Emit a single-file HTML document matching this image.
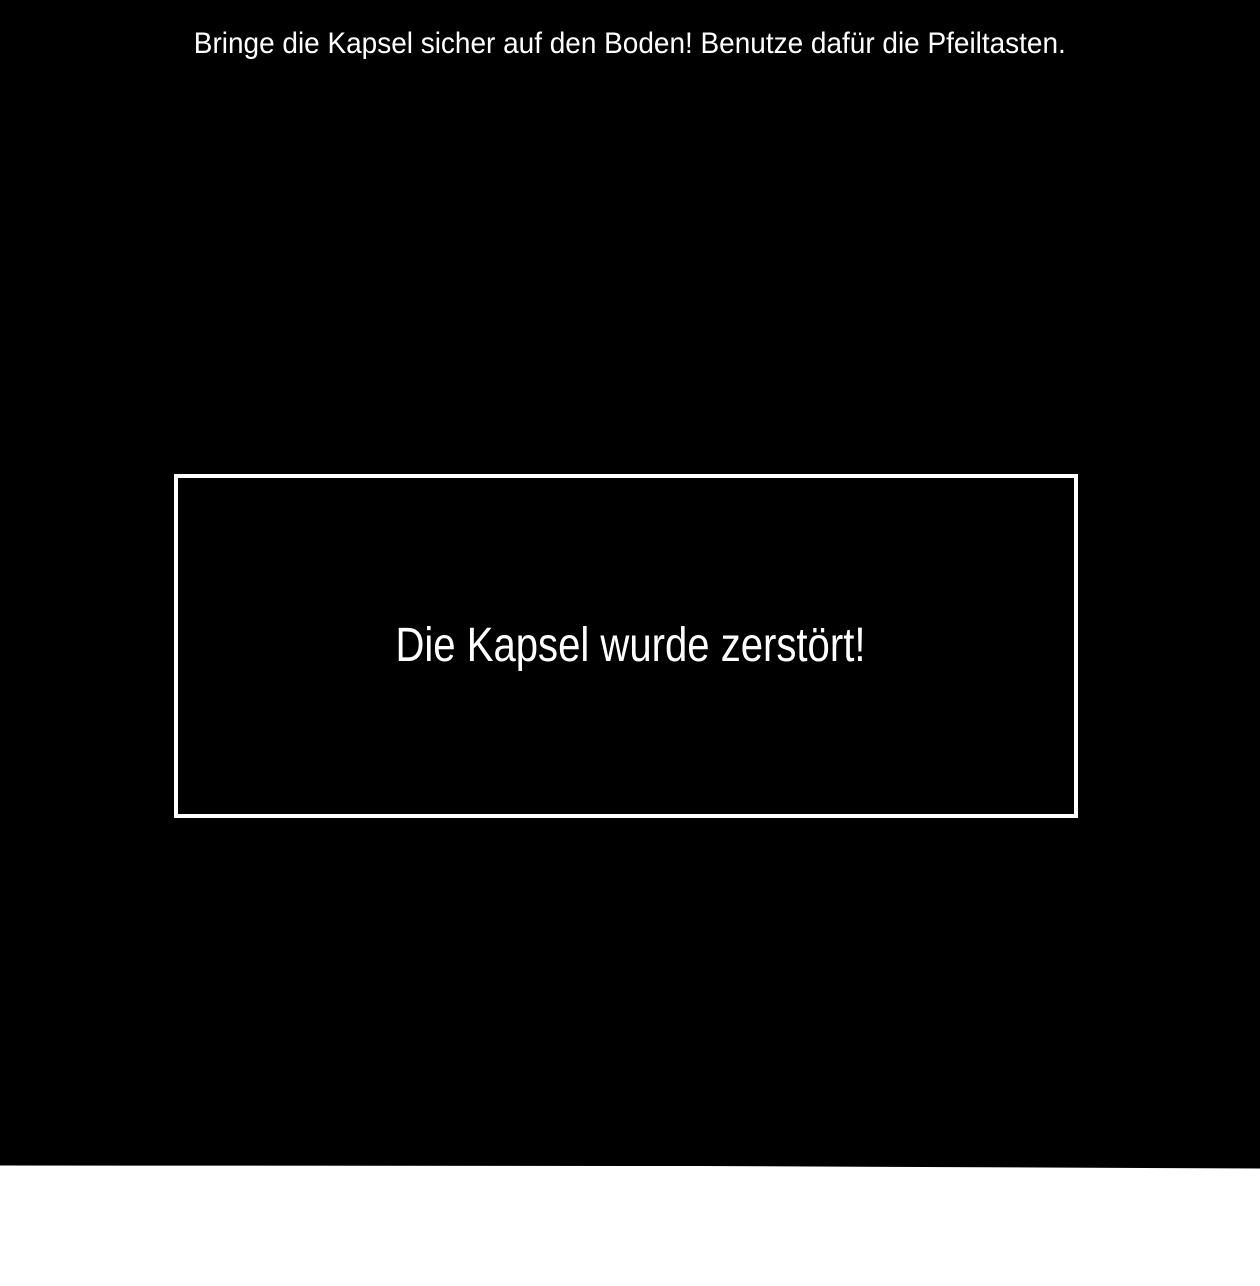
<!DOCTYPE html>
<html><head><meta charset="utf-8"><style>
html,body{margin:0;padding:0;width:1260px;height:1286px;background:#fff;overflow:hidden;font-family:"Liberation Sans",Arial,sans-serif}
#bg{position:absolute;left:0;top:0}
.top{position:absolute;left:0;width:1260px;top:26px;text-align:center;color:#fff;font-size:30px;line-height:36px;white-space:nowrap}
.top span{display:inline-block;transform:scaleX(0.932);transform-origin:center}
.box{position:absolute;left:174px;top:474px;width:896px;height:336px;border:4px solid #fff;background:#000}
.msg{position:absolute;left:0;width:904px;top:142px;text-align:center;color:#fff;font-size:48px;line-height:52px;white-space:nowrap}
.msg span{display:inline-block;transform:scaleX(0.835);transform-origin:center}
</style></head><body>
<svg id="bg" width="1260" height="1286"><polygon points="0,0 1260,0 1260,1168.5 700,1166 0,1165.5" fill="#000"/></svg>
<div class="top"><span>Bringe die Kapsel sicher auf den Boden! Benutze dafür die Pfeiltasten.</span></div>
<div class="box"><div class="msg"><span>Die Kapsel wurde zerstört!</span></div></div>
</body></html>
